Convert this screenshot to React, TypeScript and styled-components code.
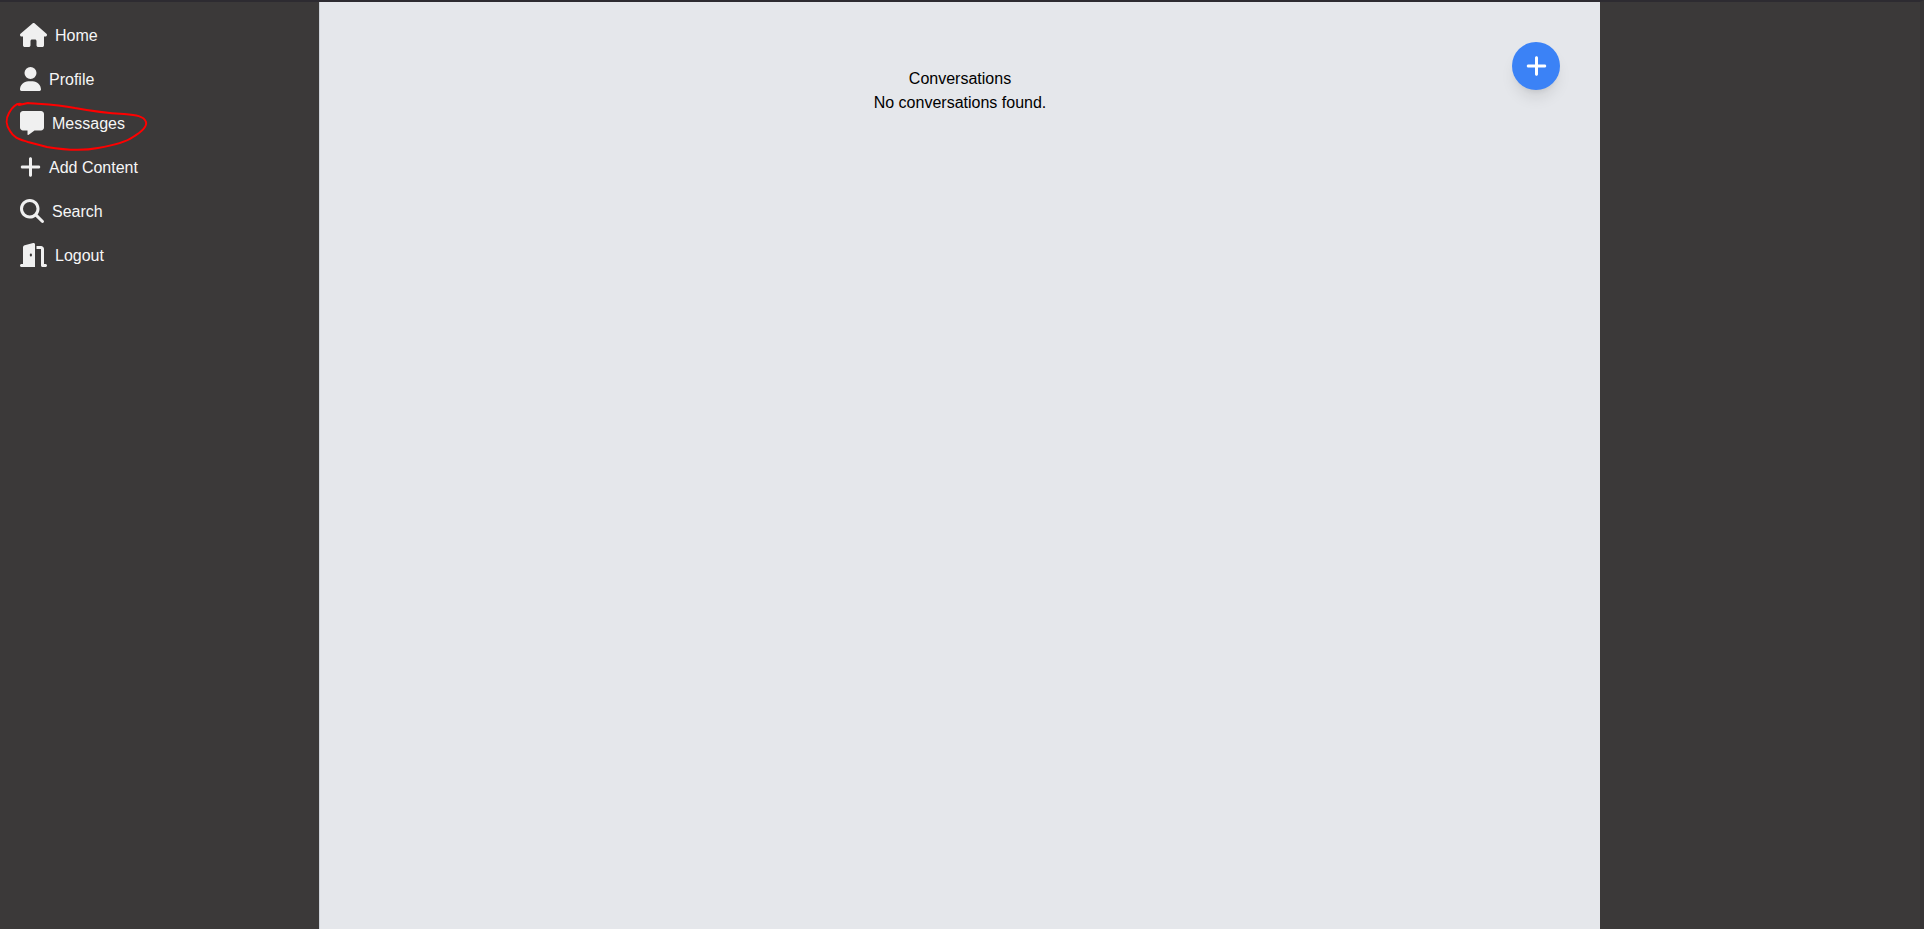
import React from "react";
import styled, { createGlobalStyle } from "styled-components";
import type { IconType } from "react-icons";
import {
  FaDoorOpen,
  FaHouse,
  FaMagnifyingGlass,
  FaMessage,
  FaPlus,
  FaUser,
} from "react-icons/fa6";

const GlobalStyle = createGlobalStyle`
  *, *::before, *::after { box-sizing: border-box; }
  body {
    margin: 0;
    background: #3b3939;
    color: #000;
    font: 16px/24px "Liberation Sans", Arial, sans-serif;
  }
`;

const Shell = styled.div`
  display: grid;
  grid-template-columns: 1fr 4fr 1fr;
  min-height: 100vh;
  border-top: 2px solid #2d2b31;
  border-right: 4px solid #363435;
`;

const Sidebar = styled.nav`
  padding: 21px 20px;
  border-right: 1px solid #ced2d8;
`;

const NavList = styled.ul`
  display: flex;
  flex-direction: column;
  gap: 19px;
  list-style: none;
  margin: 0;
  padding: 0;
`;

const NavLink = styled.a<{ $iconWidth: number }>`
  position: relative;
  color: #f6f6f6;
  text-decoration: none;

  > svg:first-child {
    width: ${({ $iconWidth }) => $iconWidth}px;
    height: 24px;
    margin-right: 8px;
    color: #f0f0f0;
    vertical-align: -6px;
  }
`;

const Highlight = styled.svg`
  position: absolute;
  left: -20px;
  top: -20px;
  width: 155px;
  height: 60px;
  pointer-events: none;
`;

const Main = styled.main`
  position: relative;
  padding: 65px 40px;
  background: #e5e7eb;
  text-align: center;
`;

const Title = styled.h1`
  margin: 0;
  font: inherit;
`;

const EmptyText = styled.p`
  margin: 0;
`;

const NewButton = styled.button`
  position: absolute;
  top: 40px;
  right: 40px;
  display: flex;
  align-items: center;
  justify-content: center;
  width: 48px;
  height: 48px;
  padding: 0;
  border: 0;
  border-radius: 50%;
  background: #3b82f6;
  color: #fff;
  cursor: pointer;
  box-shadow: 0 10px 15px -3px rgb(0 0 0 / 10%), 0 4px 6px -4px rgb(0 0 0 / 10%);

  svg {
    width: 21px;
    height: 24px;
  }
`;

const links: { label: string; icon: IconType; width: number; marked?: boolean }[] = [
  { label: "Home", icon: FaHouse, width: 27 },
  { label: "Profile", icon: FaUser, width: 21 },
  { label: "Messages", icon: FaMessage, width: 24, marked: true },
  { label: "Add Content", icon: FaPlus, width: 21 },
  { label: "Search", icon: FaMagnifyingGlass, width: 24 },
  { label: "Logout", icon: FaDoorOpen, width: 27 },
];

export default function App() {
  return (
    <>
      <GlobalStyle />
      <Shell>
        <Sidebar>
          <NavList>
            {links.map(({ label, icon: Icon, width, marked }) => (
              <li key={label}>
                <NavLink href="#" $iconWidth={width}>
                  <Icon aria-hidden />
                  {label}
                  {marked && (
                    <Highlight viewBox="0 0 155 60" aria-hidden>
                      <path
                        d="M21 9 C17 8 13 11 9 18 C5 25 6 30 10 36 C14 43 19 44 28 47 L47 52 C65 55 83 56 98 53 C116 50 126 47 133 42 C143 36 147 31 146 27 C144 21 136 20 124 19 C105 18 91 16 75 13 C56 9 39 9 28 8 L19 10"
                        fill="none"
                        stroke="#f00"
                        strokeWidth="2"
                        strokeLinecap="round"
                        strokeLinejoin="round"
                      />
                    </Highlight>
                  )}
                </NavLink>
              </li>
            ))}
          </NavList>
        </Sidebar>
        <Main>
          <Title>Conversations</Title>
          <EmptyText>No conversations found.</EmptyText>
          <NewButton type="button" aria-label="New conversation">
            <FaPlus aria-hidden />
          </NewButton>
        </Main>
      </Shell>
    </>
  );
}
